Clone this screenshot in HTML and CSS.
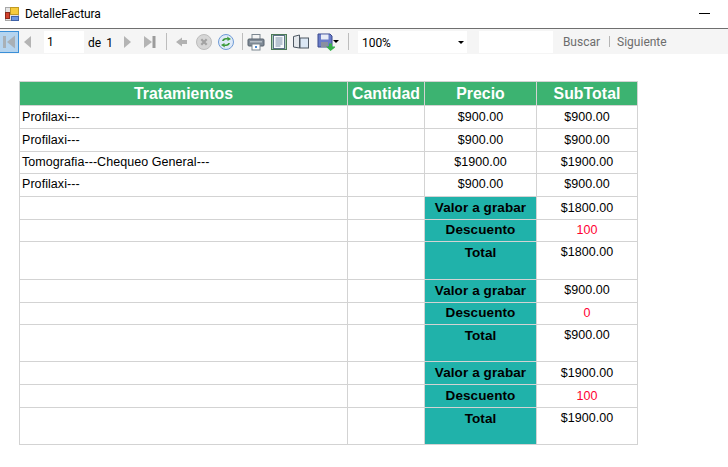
FILE: index.html
```html
<!DOCTYPE html>
<html lang="en">
<head>
    <meta charset="UTF-8">
    <meta name="viewport" content="width=device-width, initial-scale=1.0">
    <title>DetalleFactura</title>
    <link rel="stylesheet" href="styles.css">
</head>
<body>
    <header class="titlebar">
        <svg class="app-icon" width="16" height="16" viewBox="0 0 16 16">
            <rect x="1.500" y="1.500" width="13" height="13" fill="#e4e4e4" stroke="#a8a8a8"/>
            <rect x="6.500" y="1.500" width="8" height="7" fill="#f6cb3c" stroke="#c09a24"/>
            <rect x="1.500" y="6.500" width="4" height="6" fill="#d2402c" stroke="#8a2a1a"/>
            <rect x="7.500" y="10.500" width="7" height="4" fill="#6c96e0" stroke="#3f62a8"/>
        </svg>
        <span class="app-title">DetalleFactura</span>
        <span class="minimize"></span>
    </header>

    <div class="toolbar">
        <button class="tool tool-first">
            <svg width="16" height="16" viewBox="0 0 16 16"><rect x="2" y="2" width="3" height="12" fill="#a9b0b6"/><path d="M14 1.500V14.500L6 8Z" fill="#a9b0b6"/></svg>
        </button>
        <span class="tool tool-prev">
            <svg width="12" height="16" viewBox="0 0 12 16"><path d="M9 2V14L2 8Z" fill="#b4b4b4"/></svg>
        </span>
        <span class="page-input">1</span>
        <span class="page-de">de</span>
        <span class="page-total">1</span>
        <span class="tool tool-next">
            <svg width="12" height="16" viewBox="0 0 12 16"><path d="M3 2V14L10 8Z" fill="#b4b4b4"/></svg>
        </span>
        <span class="tool tool-last">
            <svg width="16" height="16" viewBox="0 0 16 16"><path d="M2 2V14L10 8Z" fill="#b4b4b4"/><rect x="10.500" y="2" width="3" height="12" fill="#9c9c9c"/></svg>
        </span>
        <span class="sep sep-a"></span>
        <span class="tool tool-back">
            <svg width="14" height="14" viewBox="0 0 14 14"><path d="M1 7L7 2.500V5H12V9H7V11.500Z" fill="#b2b2b2"/></svg>
        </span>
        <span class="tool tool-stop">
            <svg width="18" height="18" viewBox="0 0 18 18"><circle cx="9" cy="9" r="7.500" fill="#d6d6d6" stroke="#bdbdbd"/><path d="M6.300 6.300L11.700 11.700M11.700 6.300L6.300 11.700" stroke="#a2a2a2" stroke-width="2.200"/></svg>
        </span>
        <span class="tool tool-refresh">
            <svg width="18" height="18" viewBox="0 0 18 18"><circle cx="9" cy="9" r="7.500" fill="#dfeaf8" stroke="#6f9bd6"/><path d="M5 8C5.500 5.500 8 4.500 10.500 5.200L10 3.500L14 6L10.500 8L10.500 6.600C8.800 6.200 7.300 6.800 6.800 8Z" fill="#3c9a3a"/><path d="M13 10C12.500 12.500 10 13.500 7.500 12.800L8 14.500L4 12L7.500 10L7.500 11.400C9.200 11.800 10.700 11.200 11.200 10Z" fill="#3c9a3a"/></svg>
        </span>
        <span class="sep sep-b"></span>
        <span class="tool tool-print">
            <svg width="18" height="18" viewBox="0 0 18 18"><rect x="5" y="1.500" width="8" height="5" fill="#f4f4f4" stroke="#7c8790"/><rect x="1" y="6" width="16" height="7" rx="1" fill="#7f8a96" stroke="#59636e"/><rect x="3" y="8" width="12" height="1.500" fill="#b4bcc4"/><rect x="5" y="11" width="8" height="6" fill="#fff" stroke="#7c8790"/><rect x="8" y="13" width="2" height="2" fill="#4c8ad0"/></svg>
        </span>
        <span class="tool tool-page">
            <svg width="16" height="16" viewBox="0 0 16 16"><rect x="0.500" y="0.500" width="15" height="15" fill="#a9cdb0" stroke="#4d7a58"/><rect x="2.500" y="1.500" width="11" height="13" fill="#f7fafc" stroke="#5b6f86"/><path d="M4.500 4H11.500M4.500 6H11.500M4.500 8H11.500M4.500 10H11.500M4.500 12H9.500" stroke="#7d90a8"/></svg>
        </span>
        <span class="tool tool-book">
            <svg width="18" height="16" viewBox="0 0 18 16"><path d="M1.500 2.500L7.500 1V14L1.500 13Z" fill="#e4e8ec" stroke="#4e5863"/><rect x="8" y="4" width="8.500" height="10" fill="#dbe7f4" stroke="#4e5863"/></svg>
        </span>
        <span class="tool tool-save">
            <svg width="18" height="18" viewBox="0 0 18 18"><path d="M1 1H13L15 3V14H1Z" fill="#6a7cc8" stroke="#3b4a8e"/><rect x="4" y="1.500" width="7.500" height="5" fill="#e8ecf6"/><rect x="4" y="9" width="7" height="5" fill="#8a8fa0"/><path d="M9 13.500H12V10.500H15V13.500H18V14.500L13.500 18Z" fill="#35b04a"/></svg>
        </span>
        <span class="caret caret-save"></span>
        <span class="sep sep-c"></span>
        <span class="combo">100%<span class="caret"></span></span>
        <span class="search-input"></span>
        <span class="link link-buscar">Buscar</span>
        <span class="link-sep"></span>
        <span class="link">Siguiente</span>
    </div>

    <table class="report">
        <colgroup>
            <col class="col-trat">
            <col class="col-cant">
            <col class="col-precio">
            <col class="col-sub">
        </colgroup>
        <thead>
            <tr class="head-row">
                <th>Tratamientos</th>
                <th>Cantidad</th>
                <th>Precio</th>
                <th>SubTotal</th>
            </tr>
        </thead>
        <tbody>
            <tr class="row"><td>Profilaxi---</td><td></td><td class="num">$900.00</td><td class="num">$900.00</td></tr>
            <tr class="row"><td>Profilaxi---</td><td></td><td class="num">$900.00</td><td class="num">$900.00</td></tr>
            <tr class="row-s"><td>Tomografia---Chequeo General---</td><td></td><td class="num">$1900.00</td><td class="num">$1900.00</td></tr>
            <tr class="row-up"><td>Profilaxi---</td><td></td><td class="num">$900.00</td><td class="num">$900.00</td></tr>

            <tr class="row"><td></td><td></td><td class="label">Valor a grabar</td><td class="num">$1800.00</td></tr>
            <tr class="row-s"><td></td><td></td><td class="label">Descuento</td><td class="num red">100</td></tr>
            <tr class="row-total-l"><td></td><td></td><td class="label top">Total</td><td class="num top">$1800.00</td></tr>

            <tr class="row-up"><td></td><td></td><td class="label">Valor a grabar</td><td class="num">$900.00</td></tr>
            <tr class="row-s"><td></td><td></td><td class="label">Descuento</td><td class="num red">0</td></tr>
            <tr class="row-total"><td></td><td></td><td class="label top">Total</td><td class="num top">$900.00</td></tr>

            <tr class="row"><td></td><td></td><td class="label">Valor a grabar</td><td class="num">$1900.00</td></tr>
            <tr class="row"><td></td><td></td><td class="label">Descuento</td><td class="num red">100</td></tr>
            <tr class="row-total"><td></td><td></td><td class="label top">Total</td><td class="num top">$1900.00</td></tr>
        </tbody>
    </table>
</body>
</html>
```

FILE: styles.css
```css
* {
    margin: 0;
    padding: 0;
    box-sizing: border-box;
}
body {
    font-family: 'Liberation Sans', Arial, sans-serif;
    background: #fff;
    color: #000;
    overflow: hidden;
}
.titlebar {
    height: 29px;
    display: flex;
    align-items: center;
    padding: 0 18px 1px 4px;
    border-bottom: 1px solid #6f6f6f;
    background: #fff;
}
.app-title {
    font-family: Roboto, sans-serif;
    font-size: 12px;
    letter-spacing: -0.100px;
    margin-left: 5px;
    color: #000;
}
.minimize {
    margin-left: auto;
    width: 11px;
    height: 1px;
    background: #000;
}
.toolbar {
    height: 25px;
    display: flex;
    align-items: center;
    background: #f5f5f5;
    font-family: Roboto, sans-serif;
    font-size: 12px;
}
.tool {
    display: flex;
    align-items: center;
    justify-content: center;
    border: none;
    background: none;
}
.tool-first {
    width: 20px;
    height: 22px;
    margin-left: -1px;
    background: #b5d4ef;
    border: 1px solid #3a8fd8;
}
.tool-prev { margin-left: 3px; }
.page-input {
    width: 40px;
    height: 22px;
    margin-left: 10px;
    padding: 4px 0 0 3px;
    background: #fff;
}
.page-de { margin-left: 4px; padding-top: 2px; }
.page-total { margin-left: 5px; padding-top: 2px; }
.tool-next { margin-left: 8px; }
.tool-last { margin-left: 9px; }
.sep {
    width: 1px;
    height: 17px;
    background: #bdbdbd;
}
.sep-a { margin-left: 8px; }
.tool-back { margin-left: 8px; }
.tool-stop { margin-left: 6px; }
.tool-refresh { margin-left: 4px; }
.sep-b { margin-left: 7px; }
.tool-print { margin-left: 4px; }
.tool-page { margin-left: 6px; }
.tool-book { margin-left: 5px; }
.tool-save { margin-left: 7px; }
.caret {
    width: 0;
    height: 0;
    border: 3px solid transparent;
    border-top: 3px solid #000;
    border-bottom: none;
}
.caret-save { margin-left: -2px; }
.sep-c { margin-left: 9px; }
.combo {
    width: 109px;
    height: 22px;
    margin-left: 9px;
    padding: 2px 3px 0 4px;
    display: flex;
    align-items: center;
    justify-content: space-between;
    background: #fff;
}
.search-input {
    width: 74px;
    height: 22px;
    margin-left: 12px;
    background: #fff;
}
.link {
    color: #6d6d6d;
    padding-top: 1px;
}
.link-buscar { margin-left: 10px; }
.link-sep {
    width: 1px;
    height: 11px;
    margin: 0 7px 0 9px;
    background: #b5b5b5;
}
.report {
    width: 618px;
    margin: 27px 0 0 19px;
    border-collapse: collapse;
    table-layout: fixed;
    font-size: 12.500px;
    letter-spacing: 0.060px;
}
.col-trat { width: 328px; }
.col-cant { width: 77px; }
.col-precio { width: 112px; }
.col-sub { width: 101px; }
.report th,
.report td {
    border: 1px solid #d3d3d3;
    overflow: hidden;
    white-space: nowrap;
}
.report td { padding: 0 2px 2px; }
.report .row td { padding-bottom: 1px; }
.head-row { height: 24px; }
.head-row th {
    background: #3cb371;
    color: #fff;
    font-size: 15.800px;
    font-weight: bold;
    padding: 0 2px;
}
.row,
.row-up { height: 23px; }
.row-s { height: 22px; }
.row-total { height: 37px; }
.row-total-l { height: 38px; }
.report .num {
    text-align: center;
}
.report .label {
    background: #20b2aa;
    font-weight: bold;
    font-size: 13.500px;
    letter-spacing: 0.100px;
    text-align: center;
}
.report .top {
    vertical-align: top;
    padding-top: 3px;
}
.red {
    color: #ff0033;
}
```
